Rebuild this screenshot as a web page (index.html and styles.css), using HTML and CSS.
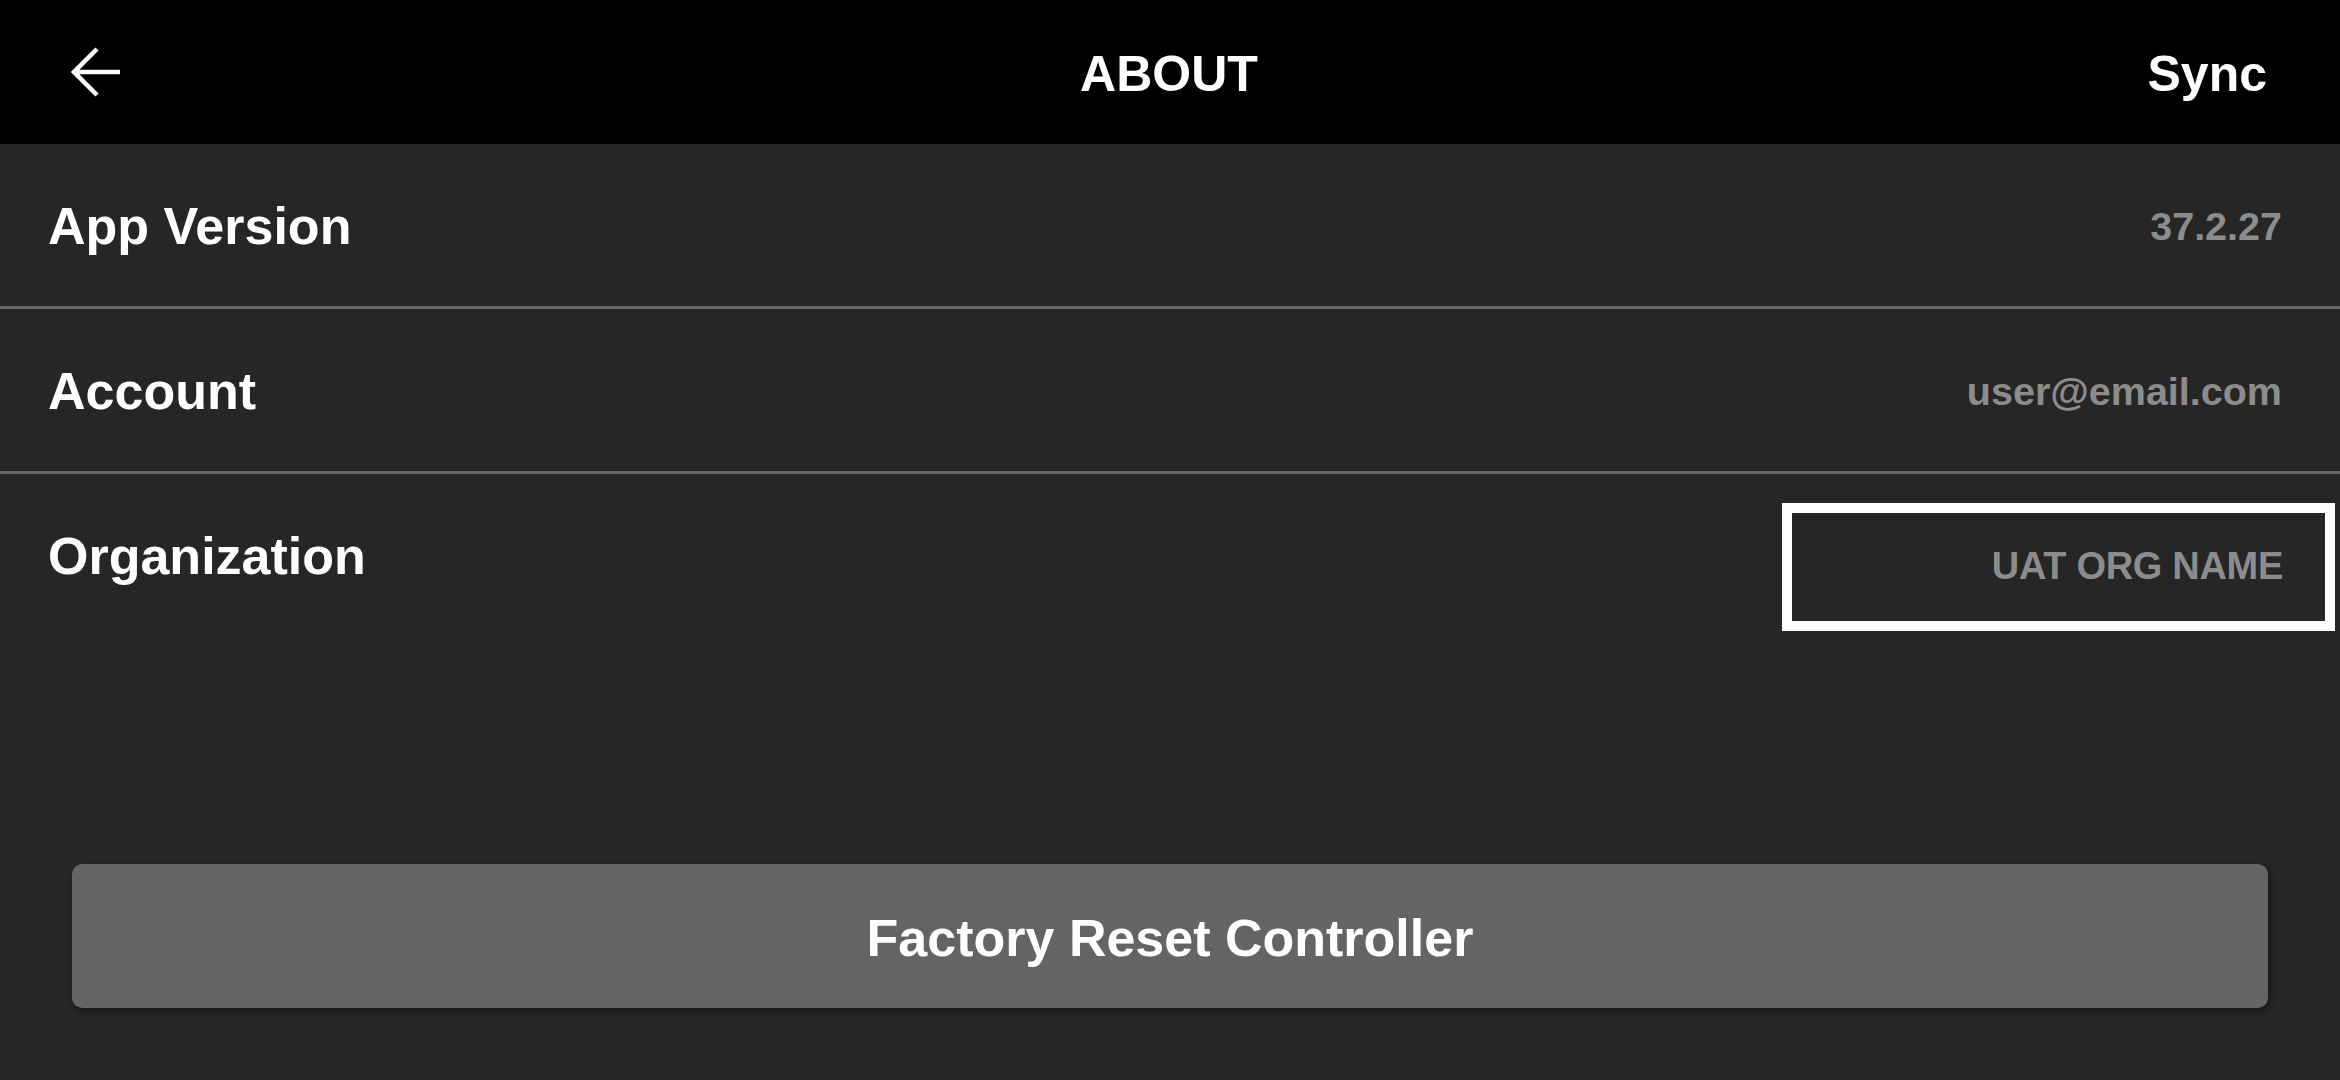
FILE: index.html
```html
<!DOCTYPE html>
<html lang="en">
<head>
    <meta charset="UTF-8">
    <meta name="viewport" content="width=device-width, initial-scale=1.0">
    <title>About</title>
    <link rel="stylesheet" href="styles.css">
</head>
<body>
    <div class="topbar">
        <div class="back">
            <svg width="50" height="50" viewBox="0 0 50 50">
                <path d="M49 25 H3 M26 2 L3 25 L26 48" fill="none" stroke="#fff" stroke-width="4.5"/>
            </svg>
        </div>
        <div class="title">ABOUT</div>
        <div class="sync">Sync</div>
    </div>

    <div class="row">
        <div class="label">App Version</div>
        <div class="value">37.2.27</div>
    </div>
    <div class="row">
        <div class="label">Account</div>
        <div class="value">user@email.com</div>
    </div>
    <div class="row last">
        <div class="label">Organization</div>
        <div class="value org">UAT ORG NAME</div>
    </div>

    <div class="reset">
        <button type="button">Factory Reset Controller</button>
    </div>
</body>
</html>
```

FILE: styles.css
```css
body {
    margin: 0;
    background-color: #262626;
    color: #fff;
    font-family: "Liberation Sans", Arial, sans-serif;
    font-weight: bold;
    height: 1080px;
    overflow: hidden;
}
.topbar {
    height: 144px;
    background-color: #000;
    display: grid;
    grid-template-columns: 1fr auto 1fr;
    align-items: center;
    padding: 0 73px 0 71px;
}
.back {
    display: flex;
    align-items: center;
}
.back svg {
    display: block;
}
.title {
    font-size: 50px;
    padding-top: 4px;
}
.sync {
    font-size: 50px;
    text-align: right;
    padding-top: 4px;
}
.row {
    height: 162px;
    display: flex;
    align-items: center;
    justify-content: space-between;
    padding: 0 58px 0 48px;
    border-bottom: 3px solid #676767;
}
.row.last {
    border-bottom: none;
}
.label {
    font-size: 52px;
    padding-top: 2px;
}
.value {
    font-size: 39.5px;
    color: #8c8c8c;
    padding-top: 2px;
}
.org {
    font-size: 38px;
    width: 449px;
    height: 106px;
    border: 10px solid #fff;
    margin: 24px -53px 0 0;
    padding: 0 42px 2px 42px;
    display: flex;
    align-items: center;
    justify-content: flex-end;
    box-sizing: content-box;
    letter-spacing: -0.3px;
}
.reset {
    padding: 228px 72px 0;
}
.reset button {
    width: 100%;
    height: 144px;
    border: none;
    border-radius: 10px;
    background-color: #646464;
    color: #fff;
    font-family: "Liberation Sans", Arial, sans-serif;
    font-weight: bold;
    font-size: 52px;
    padding-top: 4px;
    box-shadow: 2px 3px 6px rgba(0, 0, 0, 0.45);
}
```
